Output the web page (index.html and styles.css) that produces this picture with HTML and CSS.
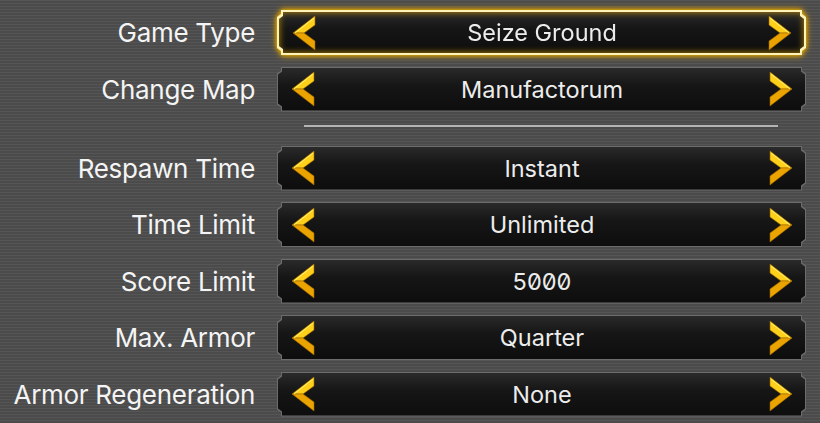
FILE: index.html
```html
<!DOCTYPE html>
<html lang="en">
<head>
    <meta charset="UTF-8">
    <title>Match Settings</title>
    <link rel="stylesheet" href="styles.css">
</head>
<body>

<svg class="defs" width="0" height="0">
    <symbol id="chev" viewBox="0 0 24 36">
        <polygon points="1,18 23,1 23,10 12,18" fill="#ffd01a" stroke="#9a6400" stroke-width="0.6"/>
        <polygon points="1,18 12,18 23,26 23,35" fill="#eba300" stroke="#9a6400" stroke-width="0.6"/>
        <polyline points="3,18 22,3" stroke="#fff27a" stroke-width="1" fill="none"/>
    </symbol>
</svg>

<div class="settings">
    <div class="row">
        <div class="label">Game Type</div>
        <div class="glow">
            <div class="picker active">
                <div class="picker-inner">
                    <svg class="arrow"><use href="#chev"/></svg>
                    <span class="value">Seize Ground</span>
                    <svg class="arrow next"><use href="#chev"/></svg>
                </div>
            </div>
        </div>
    </div>
    <div class="row">
        <div class="label">Change Map</div>
        <div class="picker">
            <div class="picker-inner">
                <svg class="arrow"><use href="#chev"/></svg>
                <span class="value">Manufactorum</span>
                <svg class="arrow next"><use href="#chev"/></svg>
            </div>
        </div>
    </div>

    <div class="divider"></div>

    <div class="row">
        <div class="label">Respawn Time</div>
        <div class="picker">
            <div class="picker-inner">
                <svg class="arrow"><use href="#chev"/></svg>
                <span class="value">Instant</span>
                <svg class="arrow next"><use href="#chev"/></svg>
            </div>
        </div>
    </div>
    <div class="row">
        <div class="label">Time Limit</div>
        <div class="picker">
            <div class="picker-inner">
                <svg class="arrow"><use href="#chev"/></svg>
                <span class="value">Unlimited</span>
                <svg class="arrow next"><use href="#chev"/></svg>
            </div>
        </div>
    </div>
    <div class="row">
        <div class="label">Score Limit</div>
        <div class="picker">
            <div class="picker-inner">
                <svg class="arrow"><use href="#chev"/></svg>
                <span class="value">5000</span>
                <svg class="arrow next"><use href="#chev"/></svg>
            </div>
        </div>
    </div>
    <div class="row">
        <div class="label">Max. Armor</div>
        <div class="picker">
            <div class="picker-inner">
                <svg class="arrow"><use href="#chev"/></svg>
                <span class="value">Quarter</span>
                <svg class="arrow next"><use href="#chev"/></svg>
            </div>
        </div>
    </div>
    <div class="row">
        <div class="label">Armor Regeneration</div>
        <div class="picker">
            <div class="picker-inner">
                <svg class="arrow"><use href="#chev"/></svg>
                <span class="value">None</span>
                <svg class="arrow next"><use href="#chev"/></svg>
            </div>
        </div>
    </div>
</div>

</body>
</html>
```

FILE: styles.css
```css
body {
    margin: 0;
    font-family: Inter, "Open Sans", sans-serif;
    font-feature-settings: "zero";
    color: #f4f4f4;
    background-color: #4d4d4d;
    background-image: repeating-linear-gradient(#555555 0 1px, #4b4b4b 1px 3px);
    height: 423px;
    overflow: hidden;
}
.defs {
    position: absolute;
}
.settings {
    padding-top: 10px;
    display: flex;
    flex-direction: column;
    gap: 11.5px;
}
.row {
    display: grid;
    grid-template-columns: 255px 529px;
    column-gap: 22px;
    align-items: center;
    height: 45px;
}
.label {
    text-align: right;
    font-size: 26px;
    font-weight: 400;
    letter-spacing: -0.3px;
}
.picker {
    height: 45px;
    padding: 1px;
    box-sizing: border-box;
    background: #6c6c6c;
    clip-path: polygon(4px 0, calc(100% - 4px) 0, calc(100% - 4px) 4px, 100% 7px, 100% calc(100% - 7px), calc(100% - 4px) calc(100% - 4px), calc(100% - 4px) 100%, 4px 100%, 4px calc(100% - 4px), 0 calc(100% - 7px), 0 7px, 4px 4px);
}
.picker-inner {
    height: 100%;
    display: flex;
    align-items: center;
    justify-content: space-between;
    padding: 0 12px 0 13px;
    background: linear-gradient(#2a2a2a, #161616 40%, #0d0d0d);
    clip-path: polygon(4px 0, calc(100% - 4px) 0, calc(100% - 4px) 4px, 100% 7px, 100% calc(100% - 7px), calc(100% - 4px) calc(100% - 4px), calc(100% - 4px) 100%, 4px 100%, 4px calc(100% - 4px), 0 calc(100% - 7px), 0 7px, 4px 4px);
}
.glow {
    filter: drop-shadow(0 0 2px #f0b400) drop-shadow(0 0 3px #c89000);
}
.picker.active {
    padding: 2px;
    background: #fff3b8;
}
.active .picker-inner {
    box-shadow: inset 0 0 7px rgba(235, 175, 0, 0.8);
}
.arrow {
    width: 24px;
    height: 36px;
    flex: none;
}
.arrow.next {
    transform: scaleX(-1);
}
.value {
    font-size: 23.5px;
    color: #ececec;
}
.divider {
    height: 2px;
    margin: 2px 42px 7px 304px;
    width: 474px;
    background: #b4b4b4;
}
```
